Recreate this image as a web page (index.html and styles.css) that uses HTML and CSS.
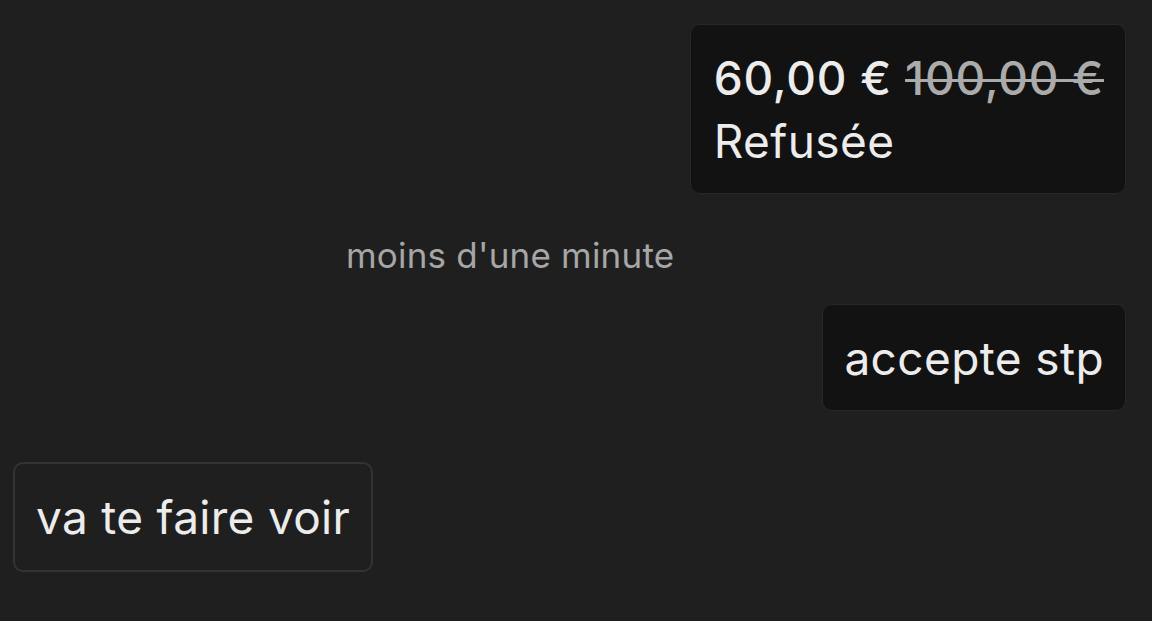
FILE: index.html
```html
<!DOCTYPE html>
<html lang="fr">
<head>
<meta charset="utf-8">
<link rel="stylesheet" href="styles.css">
</head>
<body>
<div class="chat">
  <div class="row row-out">
    <div class="bubble bubble-out bubble-offer">
      <div class="price"><span class="new">60,00 €</span> <s class="old">100,00 €</s></div>
      <div class="status">Refusée</div>
    </div>
  </div>
  <div class="time">moins d'une minute</div>
  <div class="row row-out">
    <div class="bubble bubble-out">accepte stp</div>
  </div>
  <div class="row row-in">
    <div class="bubble bubble-in">va te faire voir</div>
  </div>
</div>
</body>
</html>
```
FILE: styles.css
```css
html, body {
  margin: 0;
  padding: 0;
  background: #1f1f1f;
  height: 100%;
}
body {
  font-family: Inter, "Noto Sans", sans-serif;
  color: #ececec;
}
.chat {
  display: flex;
  flex-direction: column;
  padding: 24px 26px 0 13px;
}
.row {
  display: flex;
}
.row-out {
  justify-content: flex-end;
}
.row-in {
  justify-content: flex-start;
}
.bubble {
  font-size: 46px;
  line-height: 63px;
  letter-spacing: 0.4px;
  padding: 22px 21px 20px;
  border-radius: 10px;
}
.bubble-out {
  background: #121212;
  border: 1px solid #272727;
}
.bubble-offer {
  padding-left: 23px;
}
.bubble-in {
  background: #1f1f1f;
  border: 2px solid #333333;
  padding: 22px 21px 21px;
  letter-spacing: 0.3px;
}
.price {
  font-weight: 500;
  letter-spacing: 0.8px;
}
.old {
  color: #ababab;
  text-decoration-thickness: 3px;
}
.time {
  font-size: 35px;
  line-height: 40px;
  letter-spacing: 0.2px;
  color: #a6a6a6;
  margin: 41px 0 0 333px;
}
.row-out + .time + .row-out {
  margin-top: 29px;
}
.row-in {
  margin-top: 51px;
}
```
